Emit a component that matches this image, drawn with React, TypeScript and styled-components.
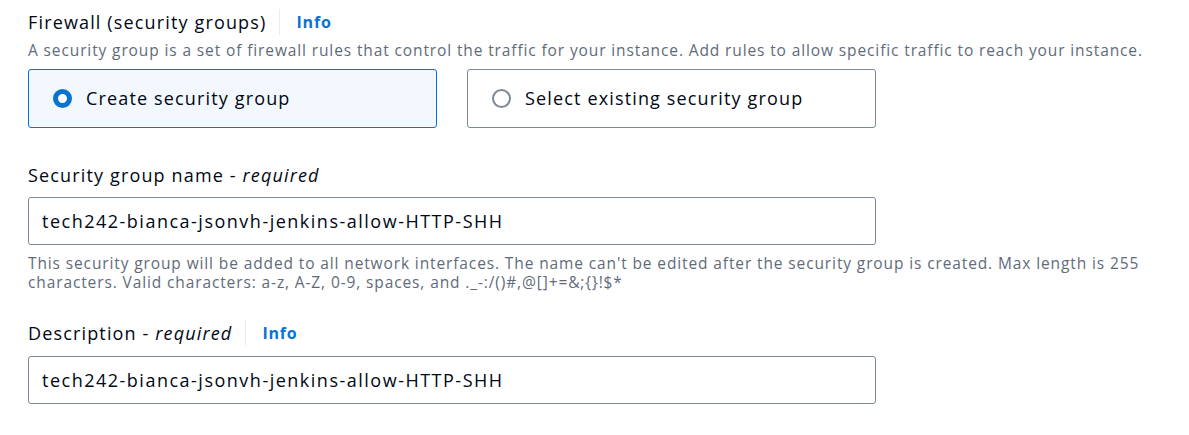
import React from "react";
import styled, { createGlobalStyle } from "styled-components";

const Global = createGlobalStyle`
  html, body { margin: 0; padding: 0; background: #ffffff; }
  body { font-family: "Open Sans", "Noto Sans", sans-serif; color: #000716; }
`;

const Page = styled.div`
  padding: 8px 0 0 28px;
  display: flex;
  flex-direction: column;
`;

const Section = styled.section<{ $top?: number }>`
  display: flex;
  flex-direction: column;
  margin-top: ${(p) => p.$top ?? 0}px;
`;

const LabelRow = styled.div`
  display: flex;
  align-items: center;
  height: 28px;
`;

const Label = styled.span`
  font-size: 18px;
  line-height: 28px;
  letter-spacing: 1.15px;
  color: #000716;
  em { font-style: italic; }
`;

const Divider = styled.span`
  width: 1px;
  height: 26px;
  background: #e9ebed;
  margin: 0 16px 0 13px;
`;

const InfoLink = styled.a`
  font-size: 16px;
  font-weight: 700;
  letter-spacing: 0.8px;
  color: #0972d3;
  text-decoration: none;
  line-height: 28px;
`;

const Hint = styled.p<{ $top: number }>`
  margin: ${(p) => p.$top}px 0 0 0;
  font-size: 15.5px;
  line-height: 19.5px;
  letter-spacing: 0.88px;
  color: #5f6b7a;
  max-width: 1135px;
`;

const Tiles = styled.div`
  display: flex;
  gap: 30px;
  margin-top: 8px;
`;

const Tile = styled.label<{ $selected?: boolean }>`
  box-sizing: border-box;
  width: 409px;
  height: 59px;
  display: flex;
  align-items: center;
  gap: 14px;
  padding-left: 24px;
  border: 1px solid ${(p) => (p.$selected ? "#0972d3" : "#7d8998")};
  background: ${(p) => (p.$selected ? "#f2f8fd" : "#ffffff")};
  border-radius: 3px;
  font-size: 18px;
  letter-spacing: 1.15px;
  color: #000716;
  cursor: pointer;
`;

const Radio = styled.span<{ $checked?: boolean }>`
  box-sizing: border-box;
  width: 19px;
  height: 19px;
  border-radius: 50%;
  flex: none;
  background: #ffffff;
  border: ${(p) => (p.$checked ? "5.5px solid #0972d3" : "2px solid #7d8998")};
`;

const Input = styled.div<{ $top: number }>`
  box-sizing: border-box;
  margin-top: ${(p) => p.$top}px;
  width: 848px;
  height: 48px;
  border: 1px solid #7d8998;
  border-radius: 3px;
  padding-left: 13px;
  display: flex;
  align-items: center;
  font-size: 18px;
  letter-spacing: 1.5px;
  color: #000716;
`;

const helpText =
  "This security group will be added to all network interfaces. The name can't be edited after the security group is created. Max length is 255 characters. Valid characters: a-z, A-Z, 0-9, spaces, and ._-:/()#,@[]+=&;{}!$*";

export default function App() {
  const name = "tech242-bianca-jsonvh-jenkins-allow-HTTP-SHH";
  return (
    <>
      <Global />
      <Page>
        <Section>
          <LabelRow>
            <Label>Firewall (security groups)</Label>
            <Divider />
            <InfoLink>Info</InfoLink>
          </LabelRow>
          <Hint $top={5}>
            A security group is a set of firewall rules that control the traffic for your instance. Add rules to allow specific traffic to reach your instance.
          </Hint>
          <Tiles>
            <Tile $selected>
              <Radio $checked />
              Create security group
            </Tile>
            <Tile>
              <Radio />
              Select existing security group
            </Tile>
          </Tiles>
        </Section>
        <Section $top={33}>
          <LabelRow>
            <Label>
              Security group name - <em>required</em>
            </Label>
          </LabelRow>
          <Input $top={8}>{name}</Input>
          <Hint $top={9}>{helpText}</Hint>
        </Section>
        <Section $top={26}>
          <LabelRow>
            <Label>
              Description - <em>required</em>
            </Label>
            <Divider />
            <InfoLink>Info</InfoLink>
          </LabelRow>
          <Input $top={9}>{name}</Input>
        </Section>
      </Page>
    </>
  );
}
